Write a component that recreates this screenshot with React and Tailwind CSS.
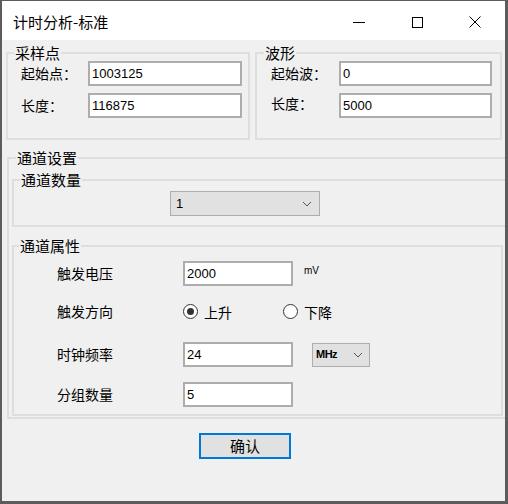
import { useState } from 'react';

const cjk = { fontFamily: '"Noto Sans CJK SC", "Liberation Sans", sans-serif' };
const latin = { fontFamily: '"Liberation Sans", Arial, sans-serif' };

function Chevron({ className }) {
    return (
        <svg className={className} width="10" height="6" viewBox="0 0 10 6" fill="none">
            <path d="M1 1l4 4 4-4" stroke="#555" strokeWidth="1" />
        </svg>
    );
}

function TextBox({ value, className = '' }) {
    return (
        <div
            style={latin}
            className={`h-[25px] bg-white border-2 border-[#adadad] flex items-center pl-[2px] text-[13px] text-black ${className}`}
        >
            {value}
        </div>
    );
}

// group box = fieldset with the legend cut into the top border
function Group({ title, className = '', legendClass = '', children }) {
    return (
        <fieldset className={`border-2 border-[#dedede] ${className}`}>
            <legend style={cjk} className={`text-[15px] leading-[16px] text-black px-[1px] ${legendClass}`}>
                {title}
            </legend>
            {children}
        </fieldset>
    );
}

function Radio({ checked, label, onClick }) {
    return (
        <div className="flex items-center cursor-default" onClick={onClick}>
            <span className="w-[15px] h-[15px] rounded-full border border-[#333] bg-white flex items-center justify-center">
                {checked && <span className="w-[7px] h-[7px] rounded-full bg-[#333]" />}
            </span>
            <span style={cjk} className="ml-[6px] text-[14px] leading-[16px]">{label}</span>
        </div>
    );
}

export default function App() {
    const [dir, setDir] = useState('up');

    return (
        <div className="w-[508px] h-[504px] flex flex-col border-t border-l-2 border-r-[3px] border-b-[3px] border-[#5c5c5c] bg-[#f0f0f0] overflow-hidden text-black">
            {/* title bar */}
            <div className="h-[39px] shrink-0 bg-white flex items-center pt-[3px]">
                <span style={cjk} className="ml-[11px] text-[15px] leading-[18px]">计时分析-标准</span>
                <div className="ml-auto mr-px flex items-center">
                    <div className="w-[58px] h-[30px] flex items-center justify-center">
                        <span className="w-[12px] h-px bg-black" />
                    </div>
                    <div className="w-[58px] h-[30px] flex items-center justify-center">
                        <span className="w-[11px] h-[11px] border border-black" />
                    </div>
                    <div className="w-[58px] h-[30px] flex items-center justify-center">
                        <svg width="12" height="12" viewBox="0 0 12 12">
                            <path d="M0.5 0.5l11 11M11.5 0.5l-11 11" stroke="#000" strokeWidth="1" />
                        </svg>
                    </div>
                </div>
            </div>

            {/* body */}
            <div className="flex-1 flex flex-col pt-[5px]">
                <div className="flex">
                    <Group title="采样点" className="ml-[4px] w-[244px] h-[95px]" legendClass="ml-[6px]">
                        <div style={cjk} className="flex flex-col gap-[7px] pl-[13px] text-[14px]">
                            <div className="flex items-center">
                                <span className="w-[67px]">起始点：</span>
                                <TextBox value="1003125" className="w-[154px]" />
                            </div>
                            <div className="flex items-center">
                                <span className="w-[67px]">长度：</span>
                                <TextBox value="116875" className="w-[154px]" />
                            </div>
                        </div>
                    </Group>
                    <Group title="波形" className="ml-[5px] w-[247px] h-[95px]" legendClass="ml-[7px]">
                        <div style={cjk} className="flex flex-col gap-[7px] pl-[14px] text-[14px]">
                            <div className="flex items-center">
                                <span className="w-[68px]">起始波：</span>
                                <TextBox value="0" className="w-[153px]" />
                            </div>
                            <div className="flex items-center">
                                <span className="w-[68px] -mt-[4px]">长度：</span>
                                <TextBox value="5000" className="w-[153px]" />
                            </div>
                        </div>
                    </Group>
                </div>

                <Group title="通道设置" className="mt-[10px] ml-[5px] w-[520px] h-[269px]" legendClass="ml-[7px]">
                    <Group title="通道数量" className="mt-[6px] ml-[3px] w-[520px] h-[55px]" legendClass="ml-[6px]">
                        <div className="mt-[3px] ml-[156px] w-[150px] h-[25px] bg-[#e1e1e1] border border-[#adadad] flex items-center pl-[5px] pr-[7px]">
                            <span style={latin} className="text-[13px]">1</span>
                            <Chevron className="ml-auto" />
                        </div>
                    </Group>

                    <Group title="通道属性" className="mt-[11px] ml-[3px] w-[491px] h-[178px]" legendClass="ml-[5px]">
                        <div style={cjk} className="pl-[43px] text-[14px] flex flex-col">
                            <div className="mt-[7px] flex items-center">
                                <span className="w-[126px]">触发电压</span>
                                <TextBox value="2000" className="w-[110px]" />
                                <span style={latin} className="self-start ml-[11px] mt-[4px] text-[10px] leading-[12px]">mV</span>
                            </div>
                            <div className="mt-[13px] h-[25px] flex items-center">
                                <span className="w-[126px]">触发方向</span>
                                <Radio checked={dir === 'up'} label="上升" onClick={() => setDir('up')} />
                                <div className="ml-[51px]">
                                    <Radio checked={dir === 'down'} label="下降" onClick={() => setDir('down')} />
                                </div>
                            </div>
                            <div className="mt-[18px] flex items-center">
                                <span className="w-[126px]">时钟频率</span>
                                <TextBox value="24" className="w-[110px]" />
                                <div className="ml-[19px] w-[58px] h-[24px] bg-[#e1e1e1] border border-[#adadad] flex items-center pl-[3px] pr-[6px]">
                                    <span style={latin} className="text-[11px] font-bold tracking-[-0.5px]">MHz</span>
                                    <Chevron className="ml-auto" />
                                </div>
                            </div>
                            <div className="mt-[15px] flex items-center">
                                <span className="w-[126px]">分组数量</span>
                                <TextBox value="5" className="w-[110px]" />
                            </div>
                        </div>
                    </Group>
                </Group>

                <button
                    style={cjk}
                    className="mt-[14px] ml-[197px] w-[92px] h-[26px] bg-[#e1e1e1] border-2 border-[#0078d7] text-[15px] leading-[16px] flex items-center justify-center"
                >
                    确认
                </button>
            </div>
        </div>
    );
}
